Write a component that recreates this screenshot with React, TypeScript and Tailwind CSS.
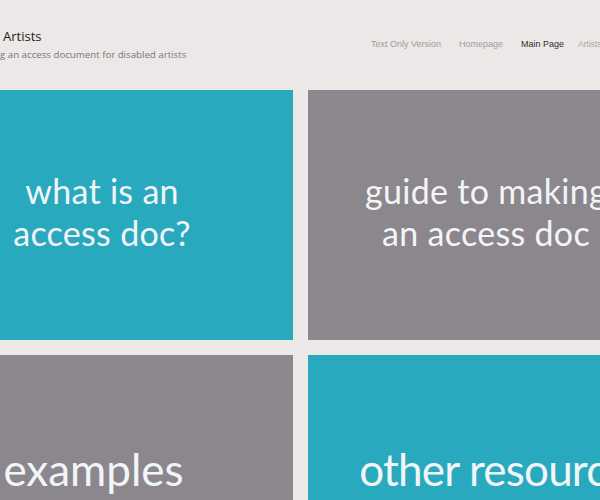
import React from "react";

const cards = [
  { lines: ["what is an", "access doc?"], color: "bg-[#29a9be]", cls: "text-[34px] leading-[42px] tracking-[0.3px] pb-[6px] pr-[6px]" },
  { lines: ["guide to making", "an access doc"], color: "bg-[#8c878c]", cls: "text-[34px] leading-[42px] tracking-[0.3px] pb-[6px] pr-[20px]" },
  { lines: ["examples"], color: "bg-[#8c878c]", cls: "text-[44px] leading-[52px] pb-[22px] pr-[23px]" },
  { lines: ["other resources"], color: "bg-[#29a9be]", cls: "text-[44px] leading-[52px] tracking-[-0.8px] pb-[22px] pl-[14px]" },
];

export default function App() {
  return (
    <div className="w-[600px] h-[500px] overflow-hidden bg-[#ece8e7]">
      <header className="h-[90px] flex items-start">
        <div className="w-[371px] shrink-0 pt-[27px] pl-[3px] font-['Open_Sans',sans-serif] whitespace-nowrap">
          <div className="text-[13px] leading-[18px] text-[#222]">Artists</div>
          <div className="ml-[-3px] mt-[3px] text-[9.7px] leading-[14px] text-[#777]">
            g an access document for disabled artists
          </div>
        </div>
        <nav className="flex items-baseline pt-[38px] whitespace-nowrap font-['Liberation_Sans',sans-serif] text-[9px]">
          <span className="text-[#a09c9c]">Text Only Version</span>
          <span className="ml-[18px] text-[#a09c9c]">Homepage</span>
          <span className="ml-[18px] text-[#2f2d2d]">Main Page</span>
          <span className="ml-[14px] text-[8.5px] text-[#aaa6a6]">Artists</span>
        </nav>
      </header>
      <div className="ml-[-83px] w-[767px] grid grid-cols-2 gap-[15px] font-['Lato',sans-serif]">
        {cards.map((c, i) => (
          <div
            key={i}
            className={`${c.color} ${c.cls} h-[250px] flex flex-col items-center justify-center text-[#f2f5f7]`}
          >
            {c.lines.map((l) => (
              <div key={l} className="whitespace-nowrap">
                {l}
              </div>
            ))}
          </div>
        ))}
      </div>
    </div>
  );
}
